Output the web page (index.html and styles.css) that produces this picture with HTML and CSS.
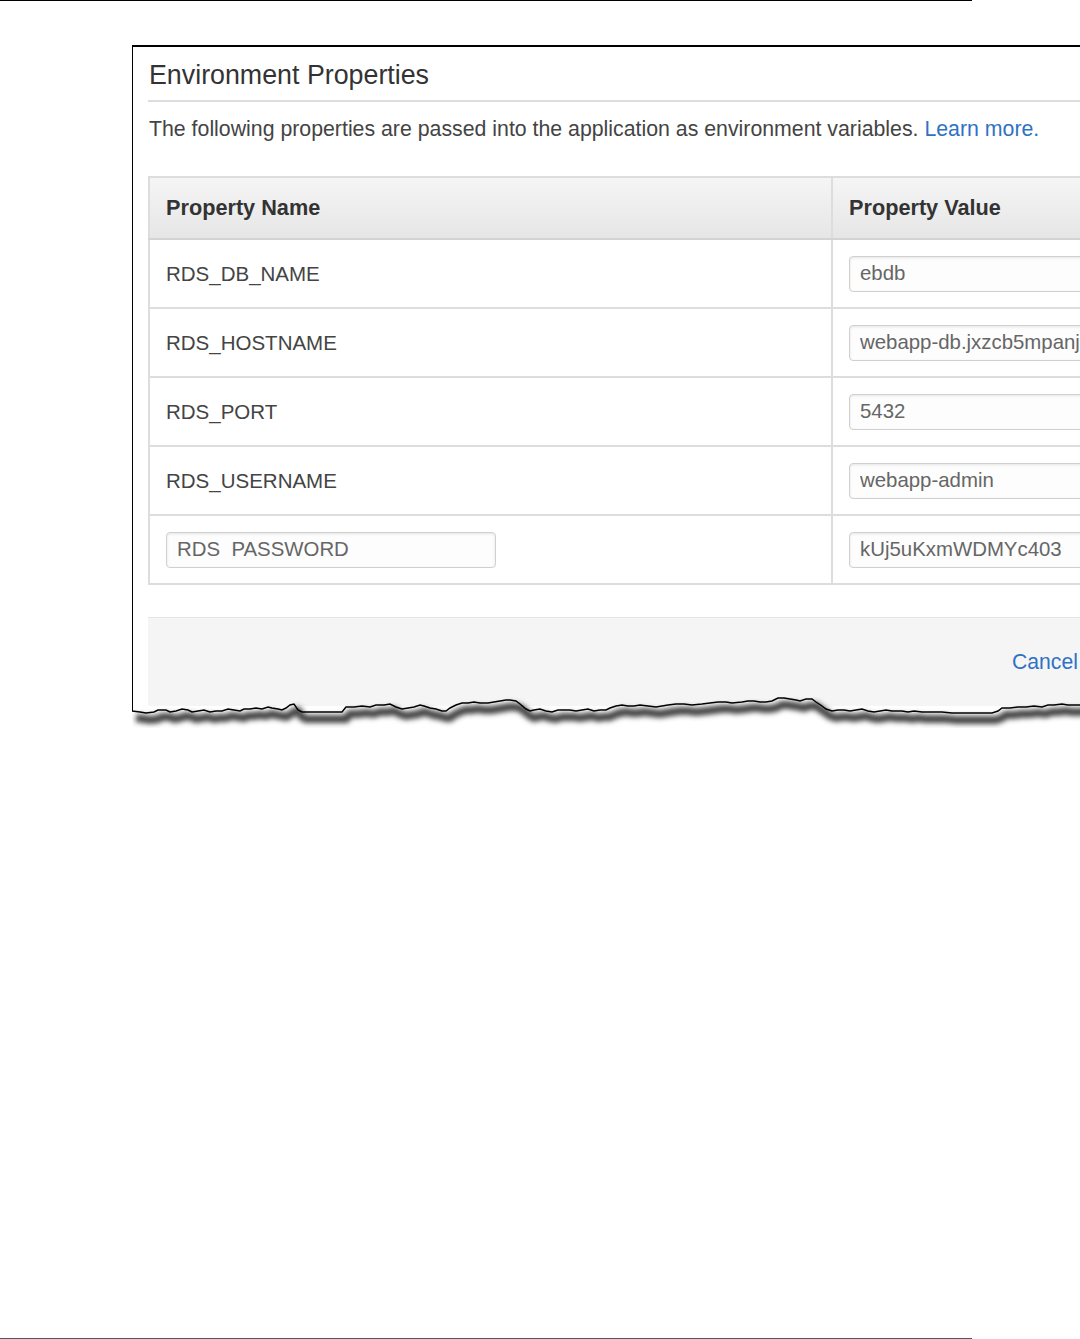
FILE: index.html
```html
<!DOCTYPE html>
<html lang="en">
<head>
    <meta charset="UTF-8">
    <title>Environment Properties</title>
    <link rel="stylesheet" href="styles.css">
</head>
<body>
    <div class="page">
        <div class="rule rule-top"></div>

        <div class="panel">
            <h2 class="panel-title">Environment Properties</h2>
            <p class="panel-desc">The following properties are passed into the application as environment variables. <a href="#">Learn more.</a></p>

            <table class="props">
                <thead>
                    <tr>
                        <th class="col-name">Property Name</th>
                        <th class="col-value">Property Value</th>
                    </tr>
                </thead>
                <tbody>
                    <tr>
                        <td>RDS_DB_NAME</td>
                        <td><input type="text" class="field" value="ebdb"></td>
                    </tr>
                    <tr>
                        <td>RDS_HOSTNAME</td>
                        <td><input type="text" class="field" value="webapp-db.jxzcb5mpanjf.us-west-2.rds.amazonaws.com"></td>
                    </tr>
                    <tr>
                        <td>RDS_PORT</td>
                        <td><input type="text" class="field" value="5432"></td>
                    </tr>
                    <tr>
                        <td>RDS_USERNAME</td>
                        <td><input type="text" class="field" value="webapp-admin"></td>
                    </tr>
                    <tr>
                        <td><input type="text" class="field field-name" value="RDS  PASSWORD"></td>
                        <td><input type="text" class="field" value="kUj5uKxmWDMYc403"></td>
                    </tr>
                </tbody>
            </table>

            <div class="panel-footer">
                <a href="#" class="cancel">Cancel</a>
            </div>

            <!-- torn paper edge -->
            <svg class="torn" width="950" height="45" viewBox="0 0 950 45">
                <defs>
                    <filter id="blur" x="-5%" y="-50%" width="110%" height="200%">
                        <feGaussianBlur stdDeviation="2.4"/>
                    </filter>
                </defs>
                <path fill="#fff" d="M0,22 L8,23 14,24 22,23 26,21 34,21 38,23 44,22 50,20 56,21 60,23 66,22 72,21 78,23 84,22 90,22 96,20 102,21 108,22 112,20 118,20 124,19 130,20 136,18 140,19 146,20 150,21 154,19 158,16 162,15 166,21 170,23 180,23 190,23 200,23 210,23 214,18 222,18 230,17 238,18 244,16 252,16 258,15 264,18 270,20 276,19 282,18 288,16 292,17 298,19 304,20 310,22 314,22 318,19 324,16 330,14 336,14 342,13 348,14 356,14 362,13 368,12 374,11 378,11 384,12 388,15 394,20 398,22 402,21 408,20 414,22 420,23 426,21 432,21 438,21 444,22 450,21 456,20 462,22 468,21 474,21 478,19 484,17 490,16 496,17 502,17 508,16 516,17 524,18 530,17 536,16 544,15 552,15 560,16 570,15 578,14 586,13 594,13 600,14 610,13 616,12 622,12 628,13 634,13 640,12 646,9 652,9 658,10 664,11 668,12 674,10 680,10 684,13 690,17 694,20 700,22 706,21 712,21 718,22 724,21 730,20 736,22 742,23 748,22 754,21 760,22 770,22 776,23 782,22 790,23 800,23 810,23 820,24 830,24 840,24 850,24 860,24 866,22 870,19 878,19 886,18 894,18 902,17 910,18 916,16 922,16 930,15 936,16 942,16 950,16 L950,45 L0,45 Z"/>
                <path id="edge" fill="none" d="M0,22 L8,23 14,24 22,23 26,21 34,21 38,23 44,22 50,20 56,21 60,23 66,22 72,21 78,23 84,22 90,22 96,20 102,21 108,22 112,20 118,20 124,19 130,20 136,18 140,19 146,20 150,21 154,19 158,16 162,15 166,21 170,23 180,23 190,23 200,23 210,23 214,18 222,18 230,17 238,18 244,16 252,16 258,15 264,18 270,20 276,19 282,18 288,16 292,17 298,19 304,20 310,22 314,22 318,19 324,16 330,14 336,14 342,13 348,14 356,14 362,13 368,12 374,11 378,11 384,12 388,15 394,20 398,22 402,21 408,20 414,22 420,23 426,21 432,21 438,21 444,22 450,21 456,20 462,22 468,21 474,21 478,19 484,17 490,16 496,17 502,17 508,16 516,17 524,18 530,17 536,16 544,15 552,15 560,16 570,15 578,14 586,13 594,13 600,14 610,13 616,12 622,12 628,13 634,13 640,12 646,9 652,9 658,10 664,11 668,12 674,10 680,10 684,13 690,17 694,20 700,22 706,21 712,21 718,22 724,21 730,20 736,22 742,23 748,22 754,21 760,22 770,22 776,23 782,22 790,23 800,23 810,23 820,24 830,24 840,24 850,24 860,24 866,22 870,19 878,19 886,18 894,18 902,17 910,18 916,16 922,16 930,15 936,16 942,16 950,16"/>
                <use href="#edge" stroke="#444" stroke-width="8" transform="translate(4,7)" filter="url(#blur)"/>
                <use href="#edge" stroke="#000" stroke-width="1.5"/>
            </svg>
        </div>

        <div class="rule rule-bottom"></div>
    </div>
</body>
</html>
```

FILE: styles.css
```css
html, body {
    margin: 0;
    padding: 0;
    background: #fff;
    overflow: hidden;
}
body {
    font-family: "Liberation Sans", Arial, sans-serif;
    color: #444;
}
.page {
    height: 1339px;
    display: flex;
    flex-direction: column;
}
.rule {
    width: 972px;
    height: 1px;
}
.rule-top {
    background: #000;
}
.rule-bottom {
    margin-top: auto;
    background: #555;
}
.panel {
    position: relative;
    margin: 44px 0 0 132px;
    width: 1100px;
    border-top: 2px solid #000;
    border-left: 1.5px solid #000;
    padding: 0 0 5px 15px;
    box-sizing: border-box;
}
.panel-title {
    margin: 0;
    padding: 13px 0 9px 1px;
    font-size: 26.8px;
    font-weight: normal;
    color: #333;
    border-bottom: 2px solid #ddd;
}
.panel-desc {
    margin: 15px 0 0 1px;
    font-size: 21.3px;
    color: #444;
}
.panel-desc a, .cancel {
    color: #2f72c4;
    text-decoration: none;
}
.props {
    margin-top: 34px;
    width: 100%;
    border-collapse: collapse;
    font-size: 20.5px;
}
.props th, .props td {
    border: 2px solid #ddd;
    padding: 0 16px;
    text-align: left;
}
.props th {
    height: 60px;
    font-size: 21.7px;
    font-weight: bold;
    color: #333;
    background: linear-gradient(#f5f5f5, #e6e6e6);
    border-bottom-color: #d3d3d3;
}
.props td {
    height: 67px;
    color: #444;
}
.col-name {
    width: 649px;
}
.field {
    display: block;
    width: 100%;
    height: 36px;
    box-sizing: border-box;
    padding: 0 10px;
    border: 1px solid #d0d0d0;
    border-radius: 4px;
    box-shadow: inset 0 1px 3px rgba(0,0,0,0.1);
    font-family: inherit;
    font-size: 20.4px;
    color: #666;
    background: #fdfdfd;
}
.field-name {
    width: 330px;
}
.panel-footer {
    margin-top: 32px;
    height: 89px;
    background: #f5f5f5;
    border-top: 1px solid #e5e5e5;
    display: flex;
    align-items: center;
    padding-left: 864px;
    box-sizing: border-box;
}
.cancel {
    font-size: 21.2px;
}
.torn {
    position: absolute;
    left: -1.5px;
    bottom: -23px;
    display: block;
}
```
